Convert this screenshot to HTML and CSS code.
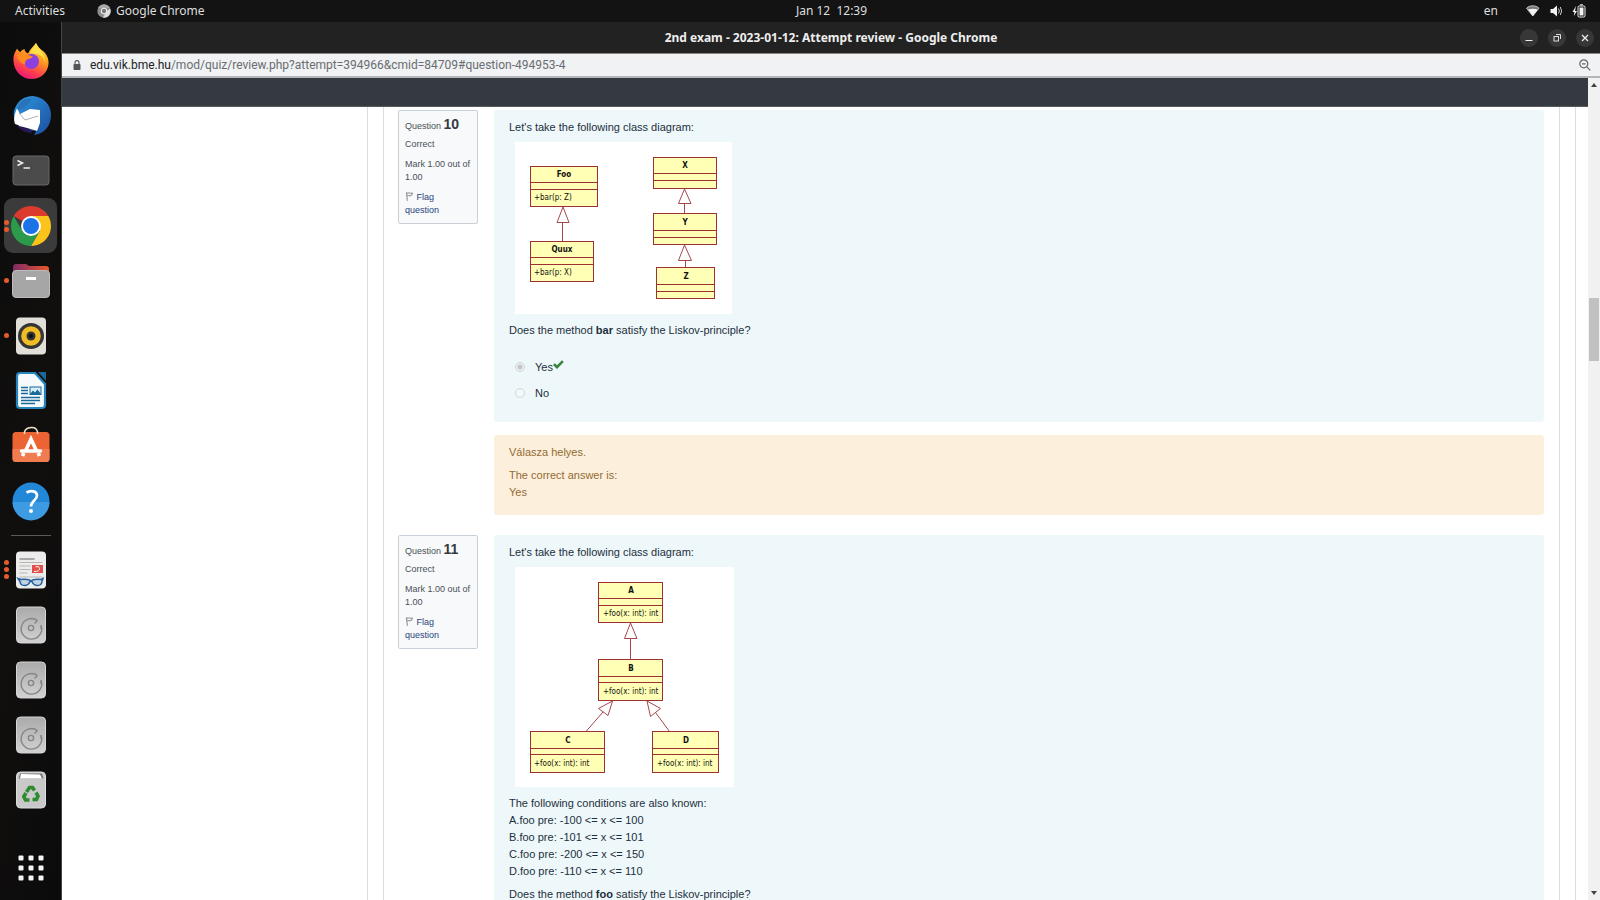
FILE: index.html
```html
<!DOCTYPE html>
<html lang="en">
<head>
<meta charset="utf-8">
<title>2nd exam - 2023-01-12: Attempt review</title>
<link rel="stylesheet" href="styles.css">
</head>
<body>
<svg width="0" height="0" class="defs" aria-hidden="true">
  <defs>
    <linearGradient id="silver" x1="0" y1="0" x2="0" y2="1"><stop offset="0" stop-color="#aaa"/><stop offset="1" stop-color="#d2d2d2"/></linearGradient>
    <linearGradient id="ff" x1=".8" y1="0" x2=".3" y2="1"><stop offset="0" stop-color="#ffe14a"/><stop offset=".4" stop-color="#ff9a1f"/><stop offset=".75" stop-color="#ff3d4d"/><stop offset="1" stop-color="#e5147f"/></linearGradient>
    <linearGradient id="folder" x1="0" y1="0" x2="1" y2="0"><stop offset="0" stop-color="#7d2a66"/><stop offset="1" stop-color="#e9572b"/></linearGradient>
    <linearGradient id="bird" x1="0" y1="0" x2="1" y2="1"><stop offset="0" stop-color="#2c9ae0"/><stop offset="1" stop-color="#1c4c9e"/></linearGradient>
    <symbol id="disk" viewBox="0 0 44 44"><rect x="7.500" y="4" width="29" height="36" rx="4" fill="url(#silver)" stroke="#d5d5d5"/><path d="M28.500 17.500A10.300 10.300 0 1 0 32 22M28.500 17.500l-3 3M32 22v4" fill="none" stroke="#858585" stroke-width="1.400"/><circle cx="22" cy="25" r="2.600" fill="none" stroke="#858585" stroke-width="1.400"/></symbol>
    <symbol id="flag" viewBox="0 0 9 9"><path d="M1.500 .5l.8 8.300M1.800 1.200c2-.9 3 .6 5.700-.2L6.300 3.600c-2 .6-2.500-.5-4.200.3" fill="none" stroke="#777" stroke-width=".9"/></symbol>
  </defs>
</svg>

<header class="topbar">
  <nav class="top-left">
    <button class="plain">Activities</button>
    <button class="plain app-menu">
      <svg width="14" height="14" viewBox="0 0 14 14"><circle cx="7" cy="7" r="6.700" fill="#8d8d8d"/><path d="M1 4.200A6.700 6.700 0 0 1 13 4H7z" fill="#aaa"/><path d="M13.200 4.500A6.700 6.700 0 0 1 6 13.600L9.800 7z" fill="#ddd"/><circle cx="7" cy="7" r="3.200" fill="#eee"/><circle cx="7" cy="7" r="2.200" fill="#777"/></svg>
      Google Chrome
    </button>
  </nav>
  <button class="plain clock">Jan 12&nbsp; 12:39</button>
  <div class="tray">
    <button class="plain">en</button>
    <svg width="60" height="14" viewBox="0 0 60 14" aria-label="System status">
      <path d="M.5 4.200C4 1 9.500 1 13 4.200L6.800 12z" fill="#777" stroke="#ddd" stroke-width=".8"/><path d="M2 5.500q5-1.600 9.700 0L6.800 12z" fill="#f3f3f3"/>
      <path d="M24.500 5h2.500l4-3.500v11l-4-3.500h-2.500z" fill="#f3f3f3"/><path d="M32.500 4.500q1.700 2.500 0 5M34.300 3q2.700 4 0 8" fill="none" stroke="#ccc"/>
      <path d="M50 2l-3.500 6h2l-.7 4L51 7h-2z" fill="#f3f3f3"/><rect x="52" y="2" width="7" height="11" rx="1.200" fill="none" stroke="#eee"/><rect x="53.500" y="3.500" width="4" height="8" fill="#f3f3f3"/><path d="M54 .8h3" stroke="#eee"/>
    </svg>
  </div>
</header>

<div class="desktop">
  <aside class="dock" aria-label="Dock">
    <button class="dock-item" aria-label="Firefox">
      <svg viewBox="0 0 44 44"><path d="M4.500 22C4 15 7 12 8 9.500c1 2 2 3 3.500 3.500 1-2 2.500-2.500 4-3 0 2 1.500 4 3.500 4.500C21 10 24 8 27 4c1 3 3.500 5 5.500 7l1.500 1c4 3.500 6 8 5.500 13C38.500 34 31.500 40 22.500 40 13 40 5 32.500 4.500 22z" fill="url(#ff)"/><path d="M27 4c1 4 9 9 9.500 20-1-4-3-7-6-8-4-1-7-2-9.500-1.500C22 10 25 8 27 4z" fill="#ffe04a"/><circle cx="22.500" cy="22.500" r="7.500" fill="#8d3fe0"/><path d="M8 16c3-2 8-1.500 11 0l5 1.500c-1 2-4 2.500-6 3-2 1.500-2 3-2 5-4-1-8-5-8-9.500z" fill="#ff8c1c"/></svg>
    </button>
    <button class="dock-item" aria-label="Thunderbird">
      <svg viewBox="0 0 44 44"><path d="M5 17C8 7 15 2 24 2c11 1 18 9 18 19 0 11-7 19-17 20l3-5C14 39 3 30 5 17z" fill="url(#bird)"/><path d="M7 27c1 8 8 12 16 12l-2-4z" fill="#291a55"/><path d="M8 14l3 6 10-5 10 1v13l-3 8c-6-2-12-4-18-5z" fill="#fff"/><path d="M8 14c-2 6-4 10-2 16l6 2z" fill="#fff"/><path d="M10 19l6 7 13-4" fill="none" stroke="#999" stroke-width=".8"/><path d="M8 15c2-8 8-11 14-10-1 4-4 7-11 11z" fill="#2a72b9"/></svg>
    </button>
    <button class="dock-item" aria-label="Terminal">
      <svg viewBox="0 0 44 44"><rect x="4" y="7" width="36" height="29" rx="3" fill="#4b4b4b" stroke="#696969"/><path d="M8.500 11.500l5 2.500-5 2.500M14.500 19h6.500" fill="none" stroke="#eee" stroke-width="1.500"/></svg>
    </button>
    <button class="dock-item active" aria-label="Google Chrome">
      <span class="dots"><i></i><i></i></span>
      <svg viewBox="0 0 44 44"><path d="M22 22L4.700 12A20 20 0 0 1 39.300 12z" fill="#dd3a2e"/><path d="M22 12h17.300A20 20 0 0 1 22 42l8.700-15z" fill="#fcc31a"/><path d="M4.700 12A20 20 0 0 0 22 42l8.700-15L22 31l-8.700-4z" fill="#2b9a4b"/><circle cx="22" cy="22" r="10" fill="#fff"/><circle cx="22" cy="22" r="8" fill="#1b73e8"/></svg>
    </button>
    <button class="dock-item" aria-label="Files">
      <span class="dots"><i></i></span>
      <svg viewBox="0 0 44 44"><path d="M4 14V8q0-3 3-3h10l3 2h17q3 0 3 3v10H4z" fill="url(#folder)"/><rect x="3.500" y="11.500" width="37" height="27" rx="3.500" fill="#a6a6a6" stroke="#bcbcbc"/><rect x="17" y="18" width="10" height="3" fill="#fff"/></svg>
    </button>
    <button class="dock-item" aria-label="Rhythmbox">
      <span class="dots"><i></i></span>
      <svg viewBox="0 0 44 44"><rect x="7" y="3.500" width="30" height="37" rx="4" fill="#e2ded8"/><circle cx="22" cy="22" r="13" fill="#353535"/><circle cx="22" cy="22" r="9.800" fill="#f2bd24"/><circle cx="22" cy="22" r="4.500" fill="#333"/><circle cx="22" cy="22" r="2" fill="#111"/></svg>
    </button>
    <button class="dock-item" aria-label="LibreOffice Writer">
      <svg viewBox="0 0 44 44"><path d="M11 4h15l10 11v21q0 3-3 3H11q-3 0-3-3V7q0-3 3-3z" fill="#f5fafd" stroke="#2585bd" stroke-width="2.200"/><path d="M29 3h8v9z" fill="#1c6898"/><path d="M12 18.500h7M12 21.500h7M12 24.500h7M12 28.500h19M12 31.500h19M12 34.500h14" stroke="#1c6898" stroke-width="1.500"/><rect x="21" y="18" width="11" height="7.500" fill="#d6effa" stroke="#1c6898"/><path d="M21 25l3-3.500 2 2 2.500-3 3.500 4.500z" fill="#1c6898"/></svg>
    </button>
    <button class="dock-item" aria-label="Software">
      <svg viewBox="0 0 44 44"><rect x="3.500" y="8" width="37" height="30" rx="3.500" fill="#ed6434"/><path d="M3.500 25h37v9.500q0 3.500-3.500 3.500H7q-3.500 0-3.500-3.500z" fill="#f07d4f"/><path d="M15.500 10V8q1-4 6.500-4.500T28.500 8v2" fill="none" stroke="#eee1c9" stroke-width="1.500"/><path d="M16.500 27l5.500-12 5.500 12M13.500 32l1.300-3M30.500 32l-1.300-3" fill="none" stroke="#fff" stroke-width="3.600"/><path d="M12.500 27h19" stroke="#fff" stroke-width="3.400" stroke-linecap="round"/></svg>
    </button>
    <button class="dock-item" aria-label="Help">
      <svg viewBox="0 0 44 44"><circle cx="22" cy="22" r="18.500" fill="#2387d7"/><path d="M3.500 23h37a18.500 18.500 0 0 1-37 0z" fill="#3c9be2"/><path d="M17.500 13.500C22 11 28 12 28 16.500c0 5-6 5-6 11" fill="none" stroke="#fff" stroke-width="2.700"/><circle cx="22" cy="32" r="2" fill="#fff"/></svg>
    </button>
    <hr class="dock-sep">
    <button class="dock-item" aria-label="Document Viewer">
      <span class="dots"><i></i><i></i><i></i></span>
      <svg viewBox="0 0 44 44"><rect x="7" y="3.500" width="30" height="37" rx="4" fill="#ececec"/><path d="M10.500 11h15" stroke="#999" stroke-width="1.600"/><path d="M10.500 14.500h23M10.500 18h11M10.500 21.500h11M10.500 25h8M10.500 29h23" stroke="#b9b5b0" stroke-width="1.200"/><rect x="23" y="17" width="11" height="8" fill="#e2504b"/><path d="M25 23.500q6 0 5.500-3t-4-1.500" fill="none" stroke="#fff"/><path d="M9 30.500l3 1q5-.5 8.500.5l1.500 1 1.500-1q4-1 8.500-.5l2-1-1 3q-.5 4-4.500 4t-5.500-4h-2q-1.500 4-5.500 4t-4.500-4z" fill="#c3d3e4" stroke="#265f9f" stroke-width="1.500"/></svg>
    </button>
    <button class="dock-item" aria-label="Disk 1"><svg viewBox="0 0 44 44"><use href="#disk"/></svg></button>
    <button class="dock-item" aria-label="Disk 2"><svg viewBox="0 0 44 44"><use href="#disk"/></svg></button>
    <button class="dock-item" aria-label="Disk 3"><svg viewBox="0 0 44 44"><use href="#disk"/></svg></button>
    <button class="dock-item" aria-label="Trash">
      <svg viewBox="0 0 44 44"><rect x="7.500" y="4" width="29" height="36" rx="4" fill="#c9c9c9" stroke="#ddd"/><path d="M11 5.500h22l1.500 5h-25z" fill="#777"/><path d="M12 6l19 .5 2 4H11z" fill="#fff"/><g fill="none" stroke="#2f8b2f" stroke-width="3.600"><path d="M17.500 24l3-4.500h3l2 3"/><path d="M27 24.500l2 3.500-1.500 3.500H23.500"/><path d="M20.500 32h-4l-1.700-3.500L17 25"/></g></svg>
    </button>
    <button class="dock-item apps" aria-label="Show Applications">
      <svg viewBox="0 0 44 44" fill="#f5f5f5"><rect x="9.500" y="9.500" width="5" height="5" rx="1"/><rect x="19.500" y="9.500" width="5" height="5" rx="1"/><rect x="29.500" y="9.500" width="5" height="5" rx="1"/><rect x="9.500" y="19.500" width="5" height="5" rx="1"/><rect x="19.500" y="19.500" width="5" height="5" rx="1"/><rect x="29.500" y="19.500" width="5" height="5" rx="1"/><rect x="9.500" y="29.500" width="5" height="5" rx="1"/><rect x="19.500" y="29.500" width="5" height="5" rx="1"/><rect x="29.500" y="29.500" width="5" height="5" rx="1"/></svg>
    </button>
  </aside>

  <div class="window">
    <div class="titlebar">
      <h1>2nd exam - 2023-01-12: Attempt review - Google Chrome</h1>
      <div class="win-buttons">
        <button aria-label="Minimize"><svg viewBox="0 0 18 18"><path d="M5.500 11.500h7" stroke="#eee"/></svg></button>
        <button aria-label="Restore"><svg viewBox="0 0 18 18" fill="none" stroke="#ddd"><rect x="6" y="7.500" width="4.500" height="4.500"/><path d="M8 5.500h4.500V10"/></svg></button>
        <button aria-label="Close"><svg viewBox="0 0 18 18"><path d="M6 6l6 6M12 6l-6 6" stroke="#eee" stroke-width="1.300"/></svg></button>
      </div>
    </div>
    <div class="urlbar">
      <svg class="lock" viewBox="0 0 8 10"><rect x=".5" y="4" width="7" height="6" rx=".8" fill="#555"/><path d="M2 4V2.600a2 2 0 0 1 4 0V4" fill="none" stroke="#555" stroke-width="1.100"/></svg>
      <span class="url"><b>edu.vik.bme.hu</b>/mod/quiz/review.php?attempt=394966&amp;cmid=84709#question-494953-4</span>
      <button class="plain zoom" aria-label="Zoom"><svg viewBox="0 0 12 12" fill="none" stroke="#666"><circle cx="4.800" cy="4.800" r="4" stroke-width="1.200"/><path d="M3 4.800h3.600M7.800 7.800l3.500 3.500" stroke-width="1.200"/></svg></button>
    </div>
    <div class="viewport">
      <div class="page">
        <div class="navbar"></div>
        <main class="region">
          <div class="card">
            <section class="question">
              <div class="info">
                <h2>Question <b>10</b></h2>
                <p>Correct</p>
                <p>Mark 1.00 out of 1.00</p>
                <a href="#flag10"><svg class="flag"><use href="#flag"/></svg> Flag question</a>
              </div>
              <div class="content">
                <div class="formulation">
                  <p>Let's take the following class diagram:</p>
                  <svg class="diagram" width="217" height="172" viewBox="0 0 217 172" role="img" aria-label="Class diagram with Foo, Quux, X, Y and Z">
                    <g class="shape">
                      <path d="M15.500 24.500h67v40h-67zM15.500 40.500h67M15.500 47.500h67"/>
                      <path d="M15.500 99.500h63v40h-63zM15.500 115.500h63M15.500 122.500h63"/>
                      <path d="M138.500 15.500h63v31h-63zM138.500 31.500h63M138.500 38.500h63"/>
                      <path d="M138.500 71.500h63v31h-63zM138.500 88.500h63M138.500 95.500h63"/>
                      <path d="M141.500 125.500h58v31h-58zM141.500 142.500h58M141.500 149.500h58"/>
                    </g>
                    <g class="link">
                      <path d="M48 65l-6 15.500h12zM47.500 80.500v19"/>
                      <path d="M169.500 47l-6 14.500h12.500zM169.500 61.500v10"/>
                      <path d="M169.500 103l-6 15.500h13zM170.500 118.500v7"/>
                    </g>
                    <g class="name"><text x="49" y="35">Foo</text><text x="47" y="110">Quux</text><text x="170" y="26">X</text><text x="170" y="83">Y</text><text x="171" y="137">Z</text></g>
                    <g class="method"><text x="19" y="58">+bar(p: Z)</text><text x="19" y="133">+bar(p: X)</text></g>
                  </svg>
                  <p>Does the method <b>bar</b> satisfy the Liskov-principle?</p>
                  <div class="answers">
                    <label><input type="radio" name="q10" checked disabled><span>Yes</span><svg class="tick" viewBox="0 0 11 10"><path d="M0 5l1.800-1.800L4 5.300 9 .3 10.800 2 4 9z" fill="#3a833d"/></svg></label>
                    <label><input type="radio" name="q10" disabled><span>No</span></label>
                  </div>
                </div>
                <div class="feedback">
                  <p>Válasza helyes.</p>
                  <p>The correct answer is:<br>Yes</p>
                </div>
              </div>
            </section>

            <section class="question">
              <div class="info">
                <h2>Question <b>11</b></h2>
                <p>Correct</p>
                <p>Mark 1.00 out of 1.00</p>
                <a href="#flag11"><svg class="flag"><use href="#flag"/></svg> Flag question</a>
              </div>
              <div class="content">
                <div class="formulation">
                  <p>Let's take the following class diagram:</p>
                  <svg class="diagram" width="219" height="220" viewBox="0 0 219 220" role="img" aria-label="Class diagram with A, B, C and D">
                    <g class="shape">
                      <path d="M83.500 15.500h64v40h-64zM83.500 31.500h64M83.500 38.500h64"/>
                      <path d="M83.500 92.500h64v41h-64zM83.500 109.500h64M83.500 115.500h64"/>
                      <path d="M15.500 164.500h74v41h-74zM15.500 181.500h74M15.500 187.500h74"/>
                      <path d="M137.500 164.500h66v41h-66zM137.500 181.500h66M137.500 187.500h66"/>
                    </g>
                    <g class="link">
                      <path d="M115.500 56l-6 15.500h12.500zM115.500 71.500v21"/>
                      <path d="M97.500 134l-14 7.500 9.500 7zM88 145l-17 19.500"/>
                      <path d="M132 134l13.500 7.500-10 8zM140.500 145.500l14 19"/>
                    </g>
                    <g class="name"><text x="116" y="26">A</text><text x="116" y="104">B</text><text x="53" y="176">C</text><text x="171" y="176">D</text></g>
                    <g class="method"><text x="88" y="49">+foo(x: int): int</text><text x="88" y="127">+foo(x: int): int</text><text x="19" y="199">+foo(x: int): int</text><text x="142" y="199">+foo(x: int): int</text></g>
                  </svg>
                  <p>The following conditions are also known:<br>A.foo pre: -100 &lt;= x &lt;= 100<br>B.foo pre: -101 &lt;= x &lt;= 101<br>C.foo pre: -200 &lt;= x &lt;= 150<br>D.foo pre: -110 &lt;= x &lt;= 110</p>
                  <p>Does the method <b>foo</b> satisfy the Liskov-principle?</p>
                </div>
              </div>
            </section>
          </div>
        </main>
      </div>
      <div class="scrollbar" aria-hidden="true"><span class="up"></span><span class="track"><span class="thumb"></span></span><span class="down"></span></div>
    </div>
  </div>
</div>
</body>
</html>
```

FILE: styles.css
```css
* { box-sizing: border-box; }
body {
  margin: 0;
  height: 100vh;
  overflow: hidden;
  display: flex;
  flex-direction: column;
  background: #0d0c0c;
  font-family: "Liberation Sans", Arial, sans-serif;
}
.defs { position: absolute; }
button { font: inherit; color: inherit; border: 0; padding: 0; background: none; }
.plain { display: flex; align-items: center; }

/* Desktop top bar */
.topbar {
  flex: none;
  height: 22px;
  display: grid;
  grid-template-columns: 1fr auto 1fr;
  align-items: center;
  padding: 0 14px 0 15px;
  background: #131313;
  color: #dedede;
  font: 12px/22px "Noto Sans", "Open Sans", sans-serif;
}
.top-left { display: flex; gap: 32px; }
.app-menu { gap: 5px; }
.clock { margin-left: 62px; }
.tray { display: flex; justify-content: flex-end; align-items: center; gap: 28px; }

.desktop { flex: 1; min-height: 0; display: flex; }

/* Dock */
.dock {
  flex: none;
  width: 62px;
  padding-top: 11px;
  display: flex;
  flex-direction: column;
  align-items: center;
  background: linear-gradient(100deg, #0c0c0c, #110f0e 50%, #0b0b0b);
  border-right: 1px solid #444;
}
.dock-item {
  position: relative;
  flex: none;
  width: 53px;
  height: 55px;
  display: flex;
  align-items: center;
  justify-content: center;
  border-radius: 9px;
}
.dock-item svg { flex: none; width: 44px; height: 44px; }
.dock-item.active { background: #3c3b3b; }
.dots {
  position: absolute;
  left: 0;
  top: 0;
  bottom: 0;
  display: flex;
  flex-direction: column;
  justify-content: center;
  gap: 2px;
}
.dots i { width: 5px; height: 5px; border-radius: 50%; background: #e55b2c; }
.dock-sep { flex: none; width: 40px; height: 1px; margin: 7px 0 6px; border: 0; background: #5a5a5a; }
.apps { margin: auto 0 5px; }

/* Browser window */
.window { flex: 1; min-width: 0; display: flex; flex-direction: column; background: #fff; }
.titlebar {
  flex: none;
  height: 31px;
  display: grid;
  grid-template-columns: 1fr auto 1fr;
  align-items: center;
  padding: 0 6px;
  background: #222;
  color: #eee;
}
.titlebar h1 { grid-column: 2; margin: 0; font: bold 12px/31px "Noto Sans", "Open Sans", sans-serif; }
.win-buttons { display: flex; justify-content: flex-end; gap: 10px; }
.win-buttons button { width: 18px; height: 18px; border-radius: 50%; background: #373737; }
.win-buttons svg { display: block; }
.urlbar {
  flex: none;
  height: 25px;
  display: flex;
  align-items: center;
  padding: 0 9px 0 11px;
  background: #f0f2f4;
  border-top: 1px solid #888;
  border-bottom: 2px solid #b4b6b8;
  color: #6a6d70;
  font: 12px/22px Roboto, "Noto Sans", sans-serif;
}
.lock { width: 8px; height: 10px; margin-right: 9px; }
.url { flex: 1; }
.url b { font-weight: normal; color: #222; }
.zoom svg { width: 12px; height: 12px; }
.viewport { flex: 1; min-height: 0; display: flex; }
.page { flex: 1; min-width: 0; overflow: hidden; display: flex; flex-direction: column; }
.navbar { flex: none; height: 29px; background: #343a40; border-bottom: 1px solid #555a5f; }

.scrollbar {
  flex: none;
  width: 12px;
  padding: 5px 1px;
  display: flex;
  flex-direction: column;
  align-items: center;
  background: #f1f1f1;
}
.up, .down { border: 3px solid transparent; }
.up { border-top: 0; border-bottom: 4px solid #444; }
.down { border-bottom: 0; border-top: 4px solid #444; }
.track { flex: 1; align-self: stretch; display: flex; flex-direction: column; }
.track::before { content: ""; flex: 211; }
.track::after { content: ""; flex: 531; }
.thumb { flex: 63; background: #c1c1c1; }

/* Course page */
.region {
  flex: 1 0 auto;
  margin: 0 12px 0 305px;
  padding: 0 15px;
  border: solid #dedede;
  border-width: 0 1px;
}
.card { padding: 3px 15px 0 14px; border: solid #dedede; border-width: 0 1px; }
.question { display: flex; align-items: flex-start; gap: 16px; margin-bottom: 20px; }
.info {
  flex: none;
  width: 80px;
  padding: 4px 6px 6px;
  background: #f8f9fa;
  border: 1px solid #cad0d7;
  border-radius: 2px;
  color: #495057;
  font-size: 9px;
  line-height: 13px;
}
.info h2 { margin: 0 0 3px; font-size: 9px; line-height: 18px; font-weight: normal; }
.info h2 b { font-size: 14px; color: #343a40; }
.info p { margin: 0 0 7px; }
.info a { display: block; padding-right: 15px; color: #2a4480; text-decoration: none; }
.flag { width: 9px; height: 9px; vertical-align: -1px; }
.content { flex: 1; min-width: 0; color: #1d2f3c; font-size: 11px; line-height: 17px; }
.content p { margin: 0 0 6px; }
.formulation { padding: 9px 15px 20px; background: #eef8fa; border-radius: 3px; }
.diagram { display: block; margin: 0 0 8px 6px; background: #fff; }
.shape path { fill: #ffffb5; stroke: #9d2f35; shape-rendering: crispEdges; }
.link path { fill: #fff; stroke: #a5484d; }
.name, .method { font: 8px "DejaVu Sans Condensed", "DejaVu Sans", sans-serif; fill: #111; }
.name { font-weight: bold; text-anchor: middle; }
.answers { display: grid; gap: 8px; padding: 13px 0 0 6px; }
.answers label { display: flex; align-items: center; height: 18px; }
.answers input {
  appearance: none;
  width: 10px;
  height: 10px;
  margin: 0 10px 0 0;
  border: 1px solid #d0d5d8;
  border-radius: 50%;
  background: #f3f8fa;
}
.answers input:checked { background: radial-gradient(circle, #c3c7c9 0 2px, #eef1f3 3px); }
.tick { width: 11px; height: 10px; margin-bottom: 4px; }
.feedback {
  margin-top: 13px;
  padding: 9px 15px 8px;
  background: #fcefdc;
  border-radius: 3px;
  color: #936b33;
}
```
